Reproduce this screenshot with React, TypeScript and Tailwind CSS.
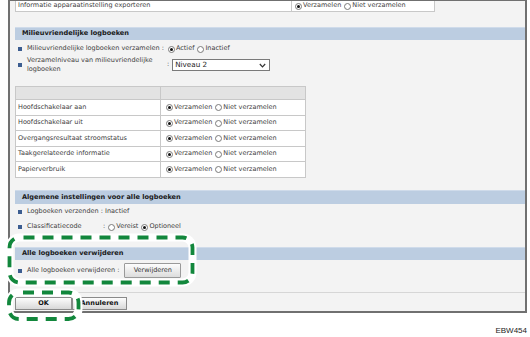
import React from "react";

function Radio({ checked }: { checked?: boolean }) {
  return (
    <span className="inline-flex items-center justify-center w-[7px] h-[7px] rounded-full border border-[#7a7a7a] bg-white shrink-0 mr-[1px]">
      {checked && <span className="w-[3px] h-[3px] rounded-full bg-[#111]" />}
    </span>
  );
}

function RadioPair({ a, b, first = true }: { a: string; b: string; first?: boolean }) {
  return (
    <span className="inline-flex items-center">
      <Radio checked={first} />
      <span>{a}</span>
      <span className="w-[3px]" />
      <Radio checked={!first} />
      <span>{b}</span>
    </span>
  );
}

function Bullet() {
  return <span className="w-[4px] h-[4px] bg-[#3c5d90] shrink-0 mr-[5px]" />;
}

function Header({ children, cls }: { children: React.ReactNode; cls: string }) {
  return (
    <div className={`${cls} bg-[#bccde1] border-t border-[#cfdbea] pl-[7px] flex items-center font-bold text-[#1a1a1a] text-[6.6px]`}>
      {children}
    </div>
  );
}

const rows = [
  "Hoofdschakelaar aan",
  "Hoofdschakelaar uit",
  "Overgangsresultaat stroomstatus",
  "Taakgerelateerde informatie",
  "Papierverbruik",
];
const rowH = ["h-[16px]", "h-[15px]", "h-[16px]", "h-[15px]", "h-[16px]"];

export default function App() {
  return (
    <div className="w-[530px] h-[337px] bg-white relative overflow-hidden font-['DejaVu_Sans',sans-serif] text-[6.5px] text-[#404040]">
      <div className="ml-[8px] w-[519px] h-[313px] bg-[#f3f3f3] border-x-2 border-b-2 border-t border-[#707070] flex flex-col pl-[5px]">
        {/* top table row */}
        <div className="w-[420px] h-[11px] bg-white border-x border-b border-[#c8c8c8] flex">
          <div className="w-[276px] border-r border-[#c8c8c8] pl-[2px] flex items-center">Informatie apparaatinstelling exporteren</div>
          <div className="pl-[3px] flex items-center">
            <RadioPair a="Verzamelen" b="Niet verzamelen" />
          </div>
        </div>

        <Header cls="mt-[15px] h-[13px]">Milieuvriendelijke logboeken</Header>

        <div className="mt-[3px] h-[12px] flex items-center pl-[3px]">
          <Bullet />
          <span>Milieuvriendelijke logboeken verzamelen :</span>
          <span className="w-[4px]" />
          <RadioPair a="Actief" b="Inactief" />
        </div>

        <div className="mt-[1px] flex items-center pl-[3px]">
          <Bullet />
          <span className="w-[136px] leading-[9px]">Verzamelniveau van milieuvriendelijke logboeken</span>
          <span className="ml-[4px] mr-[3px]">:</span>
          <div className="w-[98px] h-[12px] bg-white border border-[#7a7a7a] flex items-center justify-between pl-[2px] pr-[3px] text-[7.2px] text-[#222]">
            <span>Niveau 2</span>
            <svg width="7" height="5" viewBox="0 0 7 5">
              <polyline points="0.8,1 3.5,3.8 6.2,1" fill="none" stroke="#333" strokeWidth="1.2" />
            </svg>
          </div>
        </div>

        {/* table 2 */}
        <div className="mt-[12px] w-[291px] bg-white border border-[#c8c8c8] flex flex-col">
          <div className="h-[12px] bg-[#e3e3e3] flex">
            <div className="w-[145px] border-r border-[#c8c8c8]" />
          </div>
          {rows.map((r, i) => (
            <div key={r} className={`${rowH[i]} border-t border-[#c8c8c8] flex`}>
              <div className="w-[145px] border-r border-[#c8c8c8] pl-[2px] flex items-center">{r}</div>
              <div className="pl-[5px] flex items-center">
                <RadioPair a="Verzamelen" b="Niet verzamelen" />
              </div>
            </div>
          ))}
        </div>

        <Header cls="mt-[12px] h-[14px]">Algemene instellingen voor alle logboeken</Header>

        <div className="mt-[2px] h-[12px] flex items-center pl-[3px]">
          <Bullet />
          <span>Logboeken verzenden : Inactief</span>
        </div>
        <div className="mt-[3px] h-[12px] flex items-center pl-[3px]">
          <Bullet />
          <span className="w-[76px]">Classificatiecode</span>
          <span className="mr-[3px]">:</span>
          <RadioPair a="Vereist" b="Optioneel" first={false} />
        </div>

        <Header cls="mt-[14px] h-[13px]">Alle logboeken verwijderen</Header>

        <div className="mt-[3px] h-[15px] flex items-center pl-[3px]">
          <Bullet />
          <span>Alle logboeken verwijderen :</span>
          <span className="w-[5px]" />
          <div className="w-[57px] h-[15px] border border-[#9a9a9a] rounded-[1px] bg-gradient-to-b from-[#fdfdfd] to-[#dcdcdc] flex items-center justify-center text-[#333]">
            Verwijderen
          </div>
        </div>

        <div className="mt-[14px] -ml-[5px] h-px bg-[#d6d6d6]" />

        <div className="mt-[4px] flex">
          <div className="w-[57px] h-[13px] border border-[#8a8a8a] bg-gradient-to-b from-[#fdfdfd] to-[#d8d8d8] flex items-center justify-center font-bold text-[#111]">
            OK
          </div>
          <div className="w-[55px] h-[13px] border border-[#8a8a8a] bg-gradient-to-b from-[#fdfdfd] to-[#d8d8d8] flex items-center justify-center font-bold text-[#111]">
            Annuleren
          </div>
        </div>
      </div>

      <div className="mt-[12px] flex justify-end pr-[3px] font-['Liberation_Sans',Arial,sans-serif] text-[8px] text-[#222]">
        EBW454
      </div>

      {/* annotation overlay */}
      <svg className="absolute left-0 top-0 pointer-events-none" width="530" height="337" viewBox="0 0 530 337">
        <rect x="9.5" y="237.5" width="183" height="45" rx="10" fill="none" stroke="#ffffff" strokeWidth="8" />
        <rect x="9" y="292.5" width="69.5" height="26.5" rx="10" fill="none" stroke="#ffffff" strokeWidth="8" />
        <rect x="9.5" y="237.5" width="183" height="45" rx="10" fill="none" stroke="#12873c" strokeWidth="3.8" strokeDasharray="11 8" strokeDashoffset="-4" />
        <rect x="9" y="292.5" width="69.5" height="26.5" rx="10" fill="none" stroke="#12873c" strokeWidth="3.8" strokeDasharray="11 8" strokeDashoffset="-4" />
      </svg>
    </div>
  );
}
